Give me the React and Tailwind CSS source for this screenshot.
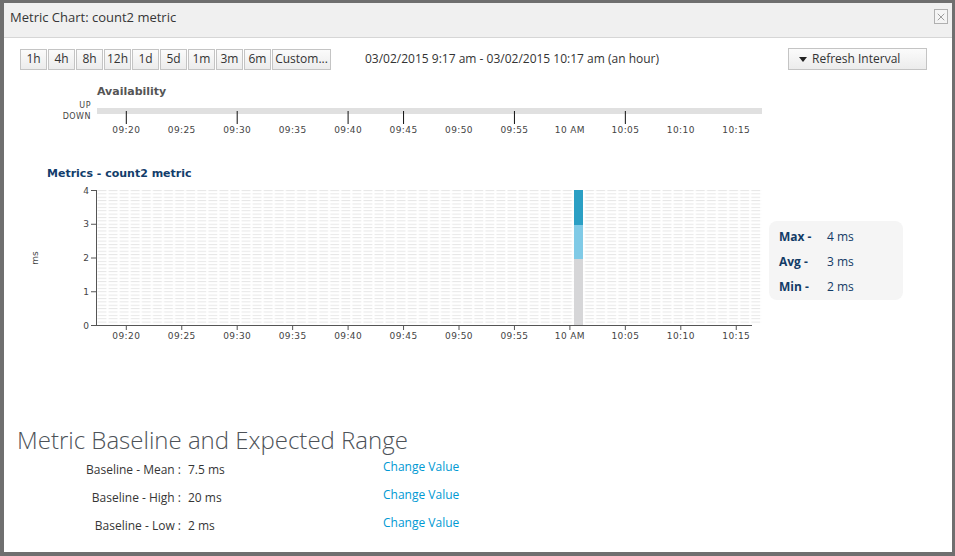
import React from "react";
import { X } from "lucide-react";

const ranges = ["1h", "4h", "8h", "12h", "1d", "5d", "1m", "3m", "6m"];
const times = ["09:20", "09:25", "09:30", "09:35", "09:40", "09:45", "09:50", "09:55", "10 AM", "10:05", "10:10", "10:15"];
const tickX = (i) => 126.3 + 55.45 * i;
// the availability axis only draws some of its ticks
const availTicks = [0, 2, 4, 5, 7, 9];

const chartFont = { fontFamily: "'DejaVu Sans', sans-serif" };

const Availability = () => (
  <svg width="770" height="60" style={chartFont}>
    <g transform="translate(-4,-82)">
      <text x="97" y="95" fontSize="11" fontWeight="bold" fill="#555">
        Availability
      </text>
      <text x="91" y="108" fontSize="8" fill="#444" textAnchor="end" letterSpacing="0.5">
        UP
      </text>
      <text x="91" y="119" fontSize="8" fill="#444" textAnchor="end" letterSpacing="0.5">
        DOWN
      </text>
      <rect x="97" y="108" width="665" height="6" fill="#e0e0e0" />
      {availTicks.map((i) => (
        <line key={i} x1={tickX(i)} x2={tickX(i)} y1="111" y2="124" stroke="#111" strokeWidth="1" />
      ))}
      {times.map((t, i) => (
        <text key={t} x={tickX(i)} y="133" fontSize="9" fill="#444" textAnchor="middle" letterSpacing="0.4">
          {t}
        </text>
      ))}
    </g>
  </svg>
);

const MetricsChart = () => (
  <svg width="765" height="182" style={chartFont}>
    <defs>
      <pattern id="grid" patternUnits="userSpaceOnUse" x="97" y="190" width="11.08" height="3.375">
        <rect x="0.5" y="0" width="9" height="1" fill="#e6e6e6" />
      </pattern>
    </defs>
    <g transform="translate(-4,-163)">
      <text x="47" y="177" fontSize="11" fontWeight="bold" fill="#123d6b">
        Metrics - count2 metric
      </text>
      <rect x="97" y="190" width="665" height="135" fill="url(#grid)" />
      <rect x="574" y="190" width="9" height="35" fill="#2b9fc4" />
      <rect x="574" y="225" width="9" height="34" fill="#80cae6" />
      <rect x="574" y="259" width="9" height="66" fill="#d6d6d8" />
      <line x1="96.5" x2="96.5" y1="190" y2="325.5" stroke="#555" />
      <line x1="96" x2="752" y1="325.5" y2="325.5" stroke="#555" />
      {[4, 3, 2, 1, 0].map((v, i) => {
        const y = 190 + i * 33.75;
        return (
          <g key={v}>
            <line x1="91" x2="96" y1={y + 0.5} y2={y + 0.5} stroke="#555" />
            <text x="89" y={y + 3.5} fontSize="9" fill="#444" textAnchor="end">
              {v}
            </text>
          </g>
        );
      })}
      {times.map((t, i) => (
        <g key={t}>
          <line x1={tickX(i)} x2={tickX(i)} y1="325" y2="330" stroke="#555" />
          <text x={tickX(i)} y="339" fontSize="9" fill="#444" textAnchor="middle" letterSpacing="0.4">
            {t}
          </text>
        </g>
      ))}
      <text x="38" y="258" fontSize="9" fill="#444" textAnchor="middle" transform="rotate(-90 38 258)">
        ms
      </text>
    </g>
  </svg>
);

const baselines = [
  { label: "Baseline - Mean :", value: "7.5 ms" },
  { label: "Baseline - High :", value: "20 ms" },
  { label: "Baseline - Low :", value: "2 ms" },
];

const stats = [
  { label: "Max -", value: "4 ms" },
  { label: "Avg -", value: "3 ms" },
  { label: "Min -", value: "2 ms" },
];

const App = () => {
  return (
    <div className="w-[955px] h-[556px] bg-[#6f6f6f] pt-[3px] pl-[4px] overflow-hidden" style={{ fontFamily: "'Open Sans', sans-serif" }}>
      <div className="w-[948px] h-[549px] bg-white flex flex-col">
        {/* header */}
        <div className="h-[35px] bg-[#f0f0f0] border-b border-[#d6d6d6] flex justify-between items-start pl-[6px] pr-[4px]">
          <div className="pt-[5px] text-[13px] leading-[18px] text-[#363636]">Metric Chart: count2 metric</div>
          <button className="mt-[6px] w-[14px] h-[15px] border border-[#b0b0b0] bg-[#f4f4f4] flex items-center justify-center">
            <X size={12} strokeWidth={1} color="#444" />
          </button>
        </div>

        {/* range buttons */}
        <div className="flex items-center mt-[10px] pl-[16px] pr-[25px]">
          <div className="flex gap-[1px]">
            {ranges.map((r) => (
              <button
                key={r}
                className="w-[27px] h-[21px] border border-[#c4c4c4] bg-gradient-to-b from-[#fbfbfb] to-[#ececec] text-[12px] leading-none text-[#333] flex items-center justify-center"
              >
                {r}
              </button>
            ))}
            <button className="w-[59px] h-[21px] border border-[#c4c4c4] bg-gradient-to-b from-[#fbfbfb] to-[#ececec] text-[12px] leading-none text-[#333] flex items-center justify-center">
              Custom...
            </button>
          </div>
          <div className="ml-[34px] text-[12px] text-[#333]">03/02/2015 9:17 am - 03/02/2015 10:17 am (an hour)</div>
          <button className="ml-auto w-[139px] h-[22px] border border-[#c4c4c4] bg-gradient-to-b from-[#fbfbfb] to-[#ececec] flex items-center pl-[10px] gap-[5px] text-[12px] text-[#333]">
            <svg width="8" height="5" viewBox="0 0 8 5">
              <polygon points="0,0 8,0 4,5" fill="#222" />
            </svg>
            Refresh Interval
          </button>
        </div>

        {/* availability */}
        <div className="mt-[12px]">
          <Availability />
        </div>

        {/* metrics */}
        <div className="flex items-start mt-[21px]">
          <MetricsChart />
          <div className="mt-[58px] w-[134px] h-[79px] bg-[#f5f5f5] rounded-[8px] pl-[10px] pt-[3px] flex flex-col">
            {stats.map((s) => (
              <div key={s.label} className="flex h-[25px] items-center text-[12px] text-[#123b66]">
                <span className="w-[48px] font-bold">{s.label}</span>
                <span>{s.value}</span>
              </div>
            ))}
          </div>
        </div>

        {/* baseline */}
        <div className="mt-[80px] pl-[13px]">
          <h2 className="text-[24px] leading-[30px] font-light text-[#4d5258]">Metric Baseline and Expected Range</h2>
          <div className="mt-[1px] flex flex-col">
            {baselines.map((b) => (
              <div key={b.label} className="flex items-center h-[28px] text-[12px] text-[#363636]">
                <span className="w-[164px] text-right">{b.label}</span>
                <span className="w-[202px] pl-[7px]">{b.value}</span>
                <a className="mb-[6px] text-[#0099d3] cursor-pointer">Change Value</a>
              </div>
            ))}
          </div>
        </div>
      </div>
    </div>
  );
};

export default App;
